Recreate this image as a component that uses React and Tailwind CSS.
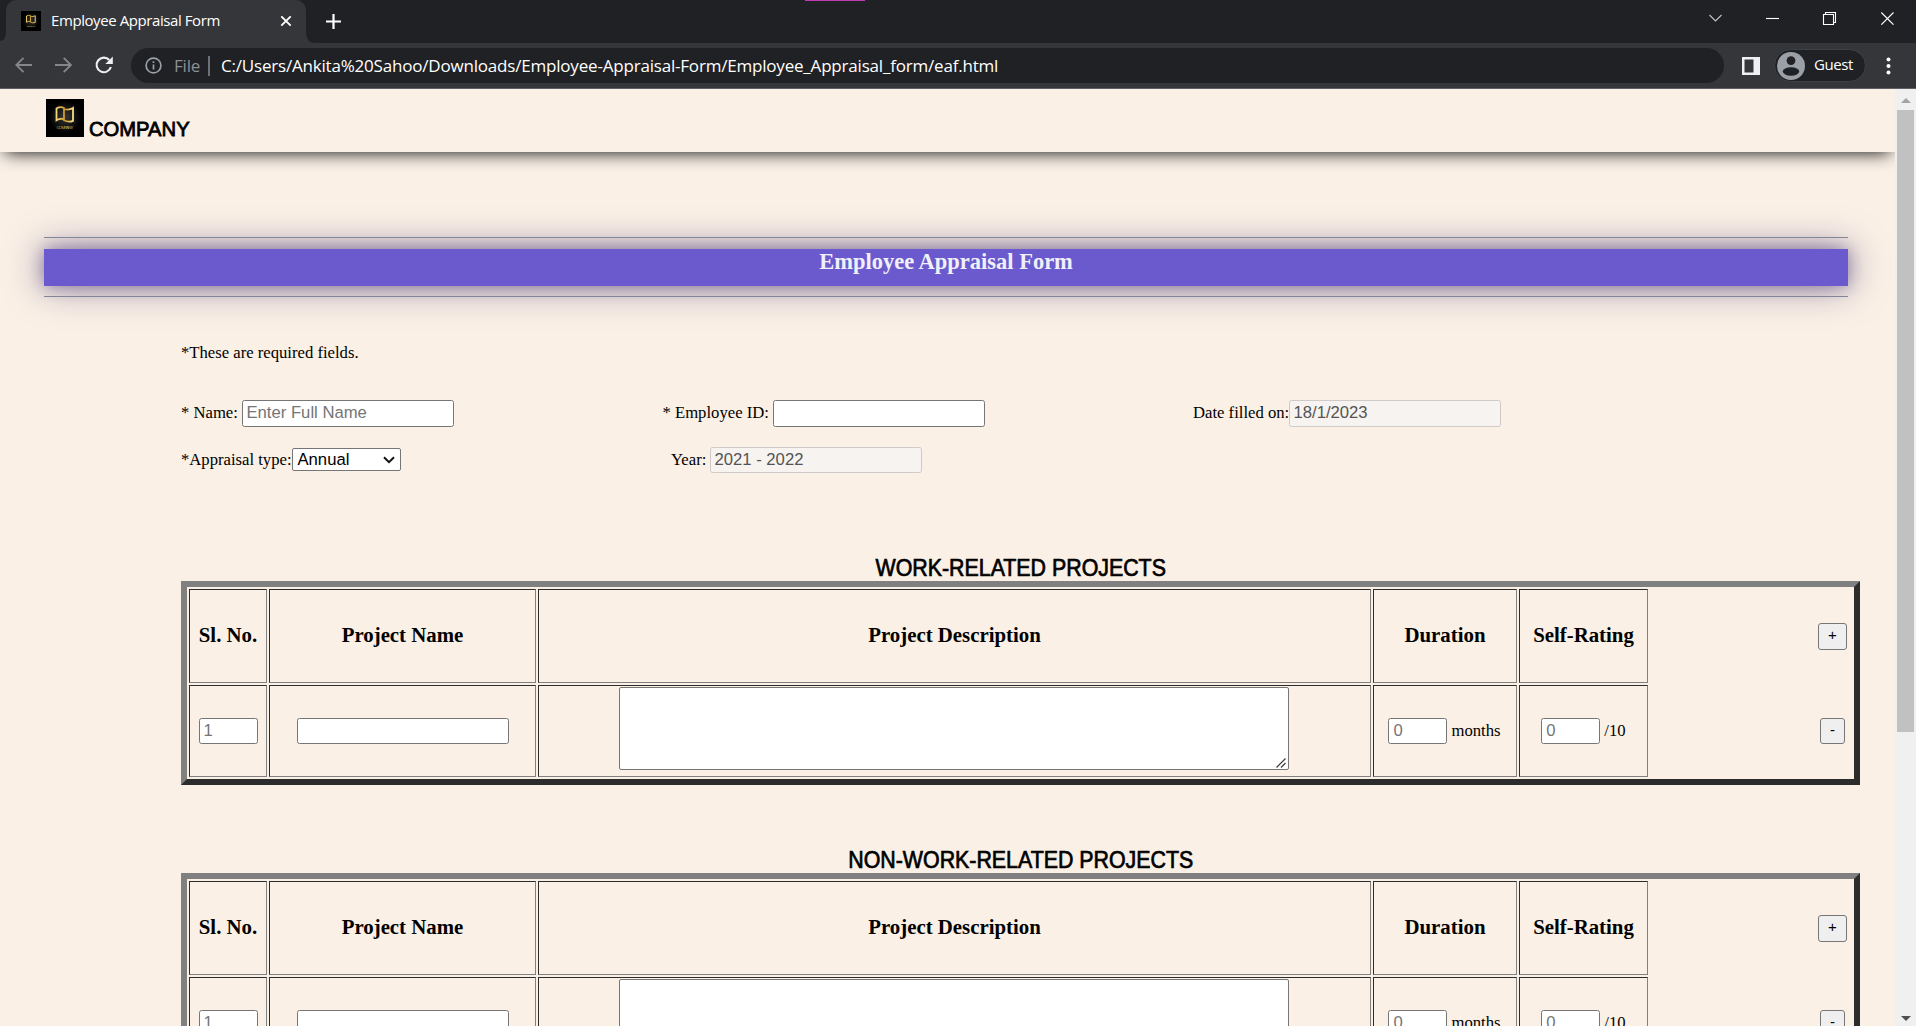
function BookLogo({ className }) {
  return (
    <svg viewBox="0 0 38 38" className={className}>
      <defs>
        <radialGradient id="glow">
          <stop offset="0" stopColor="#363636" />
          <stop offset="1" stopColor="#000000" />
        </radialGradient>
        <linearGradient id="gold">
          <stop offset="0" stopColor="#f3d877" />
          <stop offset="0.5" stopColor="#c9962c" />
          <stop offset="1" stopColor="#f5e08a" />
        </linearGradient>
      </defs>
      <rect width="38" height="38" fill="#000" />
      <circle cx="19" cy="18" r="16" fill="url(#glow)" />
      <path d="M10.5 9.5 Q14.5 7.2 18 9 V20.3 Q14.5 18.8 10.5 21.3 Z M18 9 V21.2 Q22.5 23.6 27 21.8 V9 Q23 11.6 18 10" fill="none" stroke="url(#gold)" strokeWidth="1.8" />
      <text x="19" y="30" textAnchor="middle" fontSize="4.4" fontFamily="Liberation Sans" fill="#c9a545" textLength="17">COMPANY</text>
    </svg>
  );
}

function Chrome() {
  return (
    <header className='h-[89px] shrink-0 bg-[#35363a] font-["Open_Sans",sans-serif] text-white border-b border-[#5f6063]'>
      <div className="h-[43px] bg-[#202124] flex pl-[6px] relative">
        <div className="absolute left-[805px] top-0 w-[60px] h-px bg-[#c239b3]" />
        <div className="w-[300px] h-[43px] rounded-t-[10px] bg-[#35363a] flex items-center pl-[15px] pr-[14px] relative">
          <svg className="absolute -left-[6px] bottom-0" width="6" height="10" viewBox="0 0 6 10"><path d="M6 0 V10 H0 V8 Q6 7 6 0Z" fill="#35363a" /></svg>
          <svg className="absolute -right-[10px] bottom-0" width="10" height="10" viewBox="0 0 10 10"><path d="M0 0 V10 H10 Q0 10 0 0Z" fill="#35363a" /></svg>
          <BookLogo className="size-5 mr-[10px] mb-px" />
          <span className="flex-1 whitespace-nowrap text-[15px] leading-5 tracking-[-0.42px] pb-[3px]">Employee Appraisal Form</span>
          <svg className="mb-px" width="12" height="12" viewBox="0 0 12 12" stroke="#fff" strokeWidth="1.9"><path d="M1.3 1.3 L10.7 10.7 M10.7 1.3 L1.3 10.7" /></svg>
        </div>
        <svg className="ml-[20px] mt-[14px]" width="15" height="15" viewBox="0 0 15 15" stroke="#fff" strokeWidth="2.2"><path d="M7.5 0 V15 M0 7.5 H15" /></svg>
        <div className="ml-auto flex pt-[12px] pr-[22px]">
          <svg width="185" height="13" viewBox="0 0 185 13" fill="none" stroke="#fff" strokeWidth="1.1">
            <path d="M0.5 3 L6.5 9 L12.5 3" stroke="#c5c5c7" />
            <path d="M57 6.5 H70" />
            <path d="M114.5 2.5 H124.5 V12.5 H114.5 Z M116.5 2 V0.5 H126.5 V10.5 H125" />
            <path d="M172.3 0.5 L184.5 12.7 M184.5 0.5 L172.3 12.7" />
          </svg>
        </div>
      </div>
      <div className="h-[45px] flex items-center pl-[15px]">
        <svg className="shrink-0 mb-px" width="100" height="20" viewBox="0 0 100 20" fill="none">
          <path d="M17 10 H2 M8.5 2.8 L1.3 10 L8.5 17.2" stroke="#85868a" strokeWidth="1.9" />
          <path d="M40 10 H55.5 M48.7 2.8 L55.9 10 L48.7 17.2" stroke="#85868a" strokeWidth="1.9" />
          <path d="M94.3 5 A7.3 7.3 0 1 0 95.9 12" stroke="#eeeff1" strokeWidth="2.1" />
          <path d="M97.8 1.5 V9 H90.3 Z" fill="#eeeff1" />
        </svg>
        <div className="ml-[16px] w-[1593px] h-[35px] rounded-full bg-[#202124] flex items-center pl-[14px]">
          <svg width="17" height="17" viewBox="0 0 17 17" fill="none" stroke="#9aa0a6" strokeWidth="1.7"><circle cx="8.5" cy="8.5" r="7.4" /><path d="M8.5 7.5 V12.5 M8.5 4.3 V6" /></svg>
          <span className="ml-[12px] w-[27px] text-[17px] tracking-[-0.2px] text-[#8b9096]">File</span>
          <span className="ml-[7px] w-[2px] h-5 bg-[#6d7074]" />
          <span className="ml-[11px] whitespace-nowrap text-[17px] tracking-[-0.195px]">C:/Users/Ankita%20Sahoo/Downloads/Employee-Appraisal-Form/Employee_Appraisal_form/eaf.html</span>
        </div>
        <svg className="ml-[18px]" width="18" height="18" viewBox="0 0 18 18"><path d="M0 0 H18 V18 H0 Z M2.5 2.5 V15.5 H11.5 V2.5 Z" fill="#eff0f2" fillRule="evenodd" /></svg>
        <div className="ml-[14px] w-[92px] h-[33px] rounded-full bg-[#202124] border border-[#3f4145] flex items-center pl-[2px]">
          <svg width="28" height="28" viewBox="0 0 28 28"><circle cx="14" cy="14" r="14" fill="#9aa0a6" /><circle cx="14" cy="8.6" r="4.4" fill="#202124" /><ellipse cx="14" cy="19.5" rx="8.2" ry="4.2" fill="#202124" /></svg>
          <span className="ml-[9px] pb-[2px] text-[15px] tracking-[-0.4px]">Guest</span>
        </div>
        <svg className="ml-[20px]" width="5" height="18" viewBox="0 0 5 18" fill="#fff"><circle cx="2.5" cy="2.5" r="2" /><circle cx="2.5" cy="9" r="2" /><circle cx="2.5" cy="15.5" r="2" /></svg>
      </div>
    </header>
  );
}

const FIELD = 'block rounded-[2.5px] border border-[#767676] bg-white pr-[4px] font-["Liberation_Sans",sans-serif] text-[16.67px] leading-[22px] text-black placeholder:text-[#757575]';
const INPUT = FIELD + " w-[212px] h-[27px] pl-[3.5px] pb-[2px]";
const CELL_INPUT = FIELD + " h-[26px] pl-[4px] pb-px";
const DISABLED = 'block w-[212px] rounded-[2.5px] border border-[#cfcac7] bg-[#f7f3f0] pl-[3.5px] pt-px font-["Liberation_Sans",sans-serif] text-[16.67px] leading-[22px] text-[#545454]';

const CELL = "border border-t-[#2c2c2c] border-l-[#2c2c2c] border-r-[#808080] border-b-[#808080] flex justify-center";
const HEAD = CELL + " items-center text-[20.83px] font-bold";
const BUTTON = 'block rounded-[3px] border border-[#767676] bg-[#efefef] pb-[3px] font-["Liberation_Sans",sans-serif] text-[15px] leading-[22px] text-black';

function ProjectTable({ title }) {
  return (
    <section className="flex flex-col w-[1679px]">
      <h2 className='h-[27px] text-center leading-[27px] font-["Liberation_Sans",sans-serif] text-[23.5px] text-black whitespace-nowrap pt-px'>
        <span className="inline-block scale-x-[0.909] [-webkit-text-stroke:0.7px_black]">{title}</span>
      </h2>
      <div className="h-[204px] border-6 border-t-[#808080] border-l-[#808080] border-r-[#2c2c2c] border-b-[#2c2c2c] p-[2px] grid grid-cols-[78px_267px_833px_144px_129px_1fr] grid-rows-[94px_92px] gap-[2px] text-black">
        <div className={HEAD}>Sl. No.</div>
        <div className={HEAD}>Project Name</div>
        <div className={HEAD}>Project Description</div>
        <div className={HEAD}>Duration</div>
        <div className={HEAD}>Self-Rating</div>
        <div className="flex items-center justify-end pr-[5px]"><button className={BUTTON + " w-[29px] h-[27px]"}>+</button></div>
        <div className={CELL + " items-center"}><input className={CELL_INPUT + " w-[59px]"} placeholder="1" /></div>
        <div className={CELL + " items-center"}><input className={CELL_INPUT + " w-[212px]"} /></div>
        <div className={CELL + " items-start pr-px"}>
          <div className="relative mt-px">
            <textarea className="block w-[670px] h-[83px] rounded-[2px] border border-[#767676] bg-white resize-none" />
            <svg className="absolute right-[3px] bottom-[2px]" width="10" height="10" viewBox="0 0 10 10" stroke="#3c3c3c" strokeWidth="1.2"><path d="M0.5 9.5 L9.5 0.5 M5 9.5 L9.5 5" /></svg>
          </div>
        </div>
        <div className={CELL + " items-center gap-[4px] pr-px"}><input className={CELL_INPUT + " w-[59px]"} placeholder="0" /><span className="pb-[2px]">months</span></div>
        <div className={CELL + " items-center gap-[4px]"}><input className={CELL_INPUT + " w-[59px]"} placeholder="0" /><span className="pb-[2px]">/10</span></div>
        <div className="flex items-center justify-end pr-[7px]"><button className={BUTTON + " w-[25px] h-[26px]"}>-</button></div>
      </div>
    </section>
  );
}

export default function App() {
  return (
    <div className={"w-[1916px] h-[1026px] overflow-hidden flex flex-col bg-[#faf0e6] text-[16.67px] text-black " + 'font-["Liberation_Serif",serif]'}>
      <Chrome />
      <div className="flex-1 min-h-0 flex">
        <main className="w-[1895px] overflow-hidden">
          <div className="relative h-[63px] pl-[46px] pt-[10px] flex bg-[#faf0e6] shadow-[0_5px_18px_-5px_#000]">
            <BookLogo className="size-[38px]" />
            <span className='ml-[5px] mt-[18px] text-[20.5px] leading-[24px] font-["Liberation_Sans",sans-serif] origin-left scale-x-[0.985] [-webkit-text-stroke:0.8px_black]'>COMPANY</span>
          </div>
          <div className="mt-[85px] ml-[44px] w-[1804px] h-[60px] flex flex-col justify-between">
            <hr className="border-t border-[#85859a] relative" />
            <h1 className="h-[37px] bg-[#6a5acd] text-center text-[22.5px] leading-[26px] font-bold text-[#f0f0fa] shadow-[0_0_16px_rgba(40,20,110,0.35),0_0_37px_rgba(40,20,90,0.5)]">Employee Appraisal Form</h1>
            <hr className="border-t border-[#85859a] relative" />
          </div>
          <p className="ml-[181px] mt-[46px] leading-[20px]">*These are required fields.</p>
          <div className="ml-[181px] mt-[37px] h-[27px] flex items-center">
            <label className="w-[61px] pb-[2px] whitespace-nowrap">* Name:</label>
            <input className={INPUT} placeholder="Enter Full Name" />
            <label className="ml-[208.5px] w-[110.5px] pb-[2px] whitespace-nowrap">* Employee ID:</label>
            <input className={INPUT} />
            <label className="ml-[208px] w-[96px] pb-[2px] whitespace-nowrap">Date filled on:</label>
            <div className={DISABLED + " h-[27px]"}>18/1/2023</div>
          </div>
          <div className="ml-[181px] mt-[20px] h-[26px] flex items-center">
            <label className="w-[111px] pb-[2px] whitespace-nowrap">*Appraisal type:</label>
            <div className='mb-px w-[109px] h-[23px] rounded-[2px] border border-[#767676] bg-white flex items-center pl-[4.5px] pr-[5px] justify-between font-["Liberation_Sans",sans-serif]'>
              <span className="leading-[20px]">Annual</span>
              <svg width="12" height="8" viewBox="0 0 12 8" fill="none" stroke="#111" strokeWidth="2"><path d="M1 1.2 L6 6.2 L11 1.2" /></svg>
            </div>
            <label className="ml-[270px] w-[39px] pb-[2px] whitespace-nowrap">Year:</label>
            <div className={DISABLED + " h-[26px]"}>2021 - 2022</div>
          </div>
          <div className="ml-[181px] mt-[81px] flex flex-col gap-[61px]">
            <ProjectTable title="WORK-RELATED PROJECTS" />
            <ProjectTable title="NON-WORK-RELATED PROJECTS" />
          </div>
        </main>
        <aside className="w-[21px] bg-[#f0f0f0] flex flex-col items-center py-[9px]">
          <svg width="10" height="5" viewBox="0 0 10 5"><path d="M5 0 L10 5 H0Z" fill="#a3a3a3" /></svg>
          <div className="mt-[7px] w-[17px] h-[622px] bg-[#c1c1c1]" />
          <svg className="mt-auto -mb-[4px]" width="10" height="5" viewBox="0 0 10 5"><path d="M5 5 L10 0 H0Z" fill="#505050" /></svg>
        </aside>
      </div>
    </div>
  );
}
